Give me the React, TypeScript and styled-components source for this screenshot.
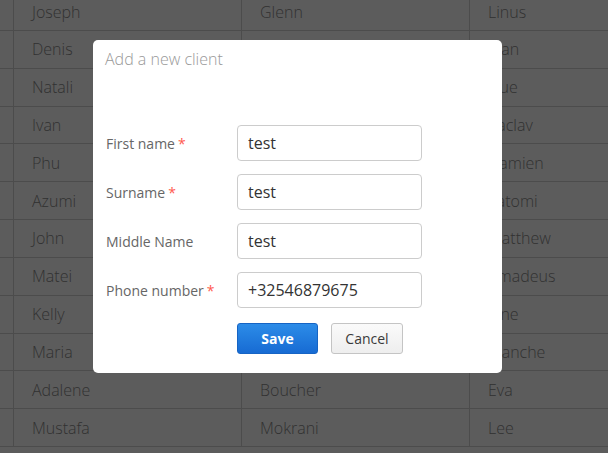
import styled, { createGlobalStyle } from "styled-components";

const GlobalStyle = createGlobalStyle`
  html, body {
    margin: 0;
    padding: 0;
    background: #ffffff;
    font-family: "Open Sans", "Liberation Sans", sans-serif;
  }
`;

const Page = styled.div`
  position: relative;
  width: 608px;
  height: 453px;
  overflow: hidden;
  background: #ffffff;
`;

const Table = styled.div`
  display: flex;
  flex-direction: column;
  margin-top: -6.8px;
`;

const Row = styled.div`
  display: grid;
  grid-template-columns: 14px 228px 228px 228px;
  height: 37.82px;
  flex-shrink: 0;
  border-bottom: 1px solid #d2d2d2;
  box-sizing: border-box;
`;

const Cell = styled.div`
  display: flex;
  align-items: center;
  padding-left: 18px;
  border-right: 1px solid #d2d2d2;
  font-size: 16px;
  font-weight: 300;
  color: #8a8a8a;
  white-space: nowrap;
  overflow: hidden;
`;

const EdgeCell = styled(Cell)`
  padding-left: 0;
`;

const Mask = styled.div`
  position: absolute;
  inset: 0;
  background: rgba(0, 0, 0, 0.64);
`;

const Window = styled.div`
  position: absolute;
  left: 93px;
  top: 40px;
  width: 409px;
  height: 333px;
  background: #ffffff;
  border-radius: 5px;
  display: flex;
  flex-direction: column;
  box-sizing: border-box;
`;

const Head = styled.div`
  height: 38px;
  display: flex;
  align-items: center;
  padding-left: 12px;
  font-size: 16px;
  font-weight: 300;
  color: #999999;
`;

const Form = styled.div`
  display: flex;
  flex-direction: column;
  gap: 13px;
  padding: 47px 0 0 13px;
`;

const Field = styled.div`
  display: flex;
  align-items: center;
  height: 36px;
`;

const Label = styled.label`
  width: 131px;
  font-size: 14px;
  color: #666666;
`;

const Star = styled.span`
  color: #ff5a4f;
  margin-left: 3px;
`;

const Input = styled.input`
  width: 185px;
  height: 36px;
  box-sizing: border-box;
  border: 1px solid #cccccc;
  border-radius: 4px;
  padding: 0 10px;
  font-family: "Open Sans", "Liberation Sans", sans-serif;
  font-size: 16px;
  color: #333333;
  outline: none;
`;

const Buttons = styled.div`
  display: flex;
  gap: 13px;
  margin: 2px 0 0 131px;
`;

const Button = styled.button<{ $primary?: boolean }>`
  height: 31px;
  padding: 0;
  box-sizing: border-box;
  border-radius: 3px;
  font-family: "Open Sans", "Liberation Sans", sans-serif;
  font-size: 14px;
  cursor: pointer;
  width: ${(p) => (p.$primary ? "81px" : "72px")};
  font-weight: ${(p) => (p.$primary ? 700 : 400)};
  color: ${(p) => (p.$primary ? "#ffffff" : "#3a3a3a")};
  background: ${(p) =>
    p.$primary
      ? "linear-gradient(#2c8ce8, #176bd3)"
      : "linear-gradient(#fafafa, #eeeeee)"};
  border: 1px solid ${(p) => (p.$primary ? "#1664c4" : "#c4c4c4")};
`;

const rows = [
  ["Joseph", "Glenn", "Linus"],
  ["Denis", "Ritchie", "Alan"],
  ["Natali", "Pohl", "Hue"],
  ["Ivan", "Petrov", "Vaclav"],
  ["Phu", "Nguyen", "Damien"],
  ["Azumi", "Tanaka", "Satomi"],
  ["John", "Carter", "Matthew"],
  ["Matei", "Popescu", "Amadeus"],
  ["Kelly", "Stone", "Jane"],
  ["Maria", "Lopez", "Blanche"],
  ["Adalene", "Boucher", "Eva"],
  ["Mustafa", "Mokrani", "Lee"],
];

const fields = [
  { label: "First name", value: "test", required: true },
  { label: "Surname", value: "test", required: true },
  { label: "Middle Name", value: "test", required: false },
  { label: "Phone number", value: "+32546879675", required: true },
];

export default function App() {
  return (
    <Page>
      <GlobalStyle />
      <Table>
        {rows.map((r, i) => (
          <Row key={i}>
            <EdgeCell />
            {r.map((c) => (
              <Cell key={c}>{c}</Cell>
            ))}
          </Row>
        ))}
      </Table>
      <Mask />
      <Window>
        <Head>Add a new client</Head>
        <Form>
          {fields.map((f) => (
            <Field key={f.label}>
              <Label>
                {f.label}
                {f.required && <Star>*</Star>}
              </Label>
              <Input defaultValue={f.value} />
            </Field>
          ))}
          <Buttons>
            <Button $primary>Save</Button>
            <Button>Cancel</Button>
          </Buttons>
        </Form>
      </Window>
    </Page>
  );
}
